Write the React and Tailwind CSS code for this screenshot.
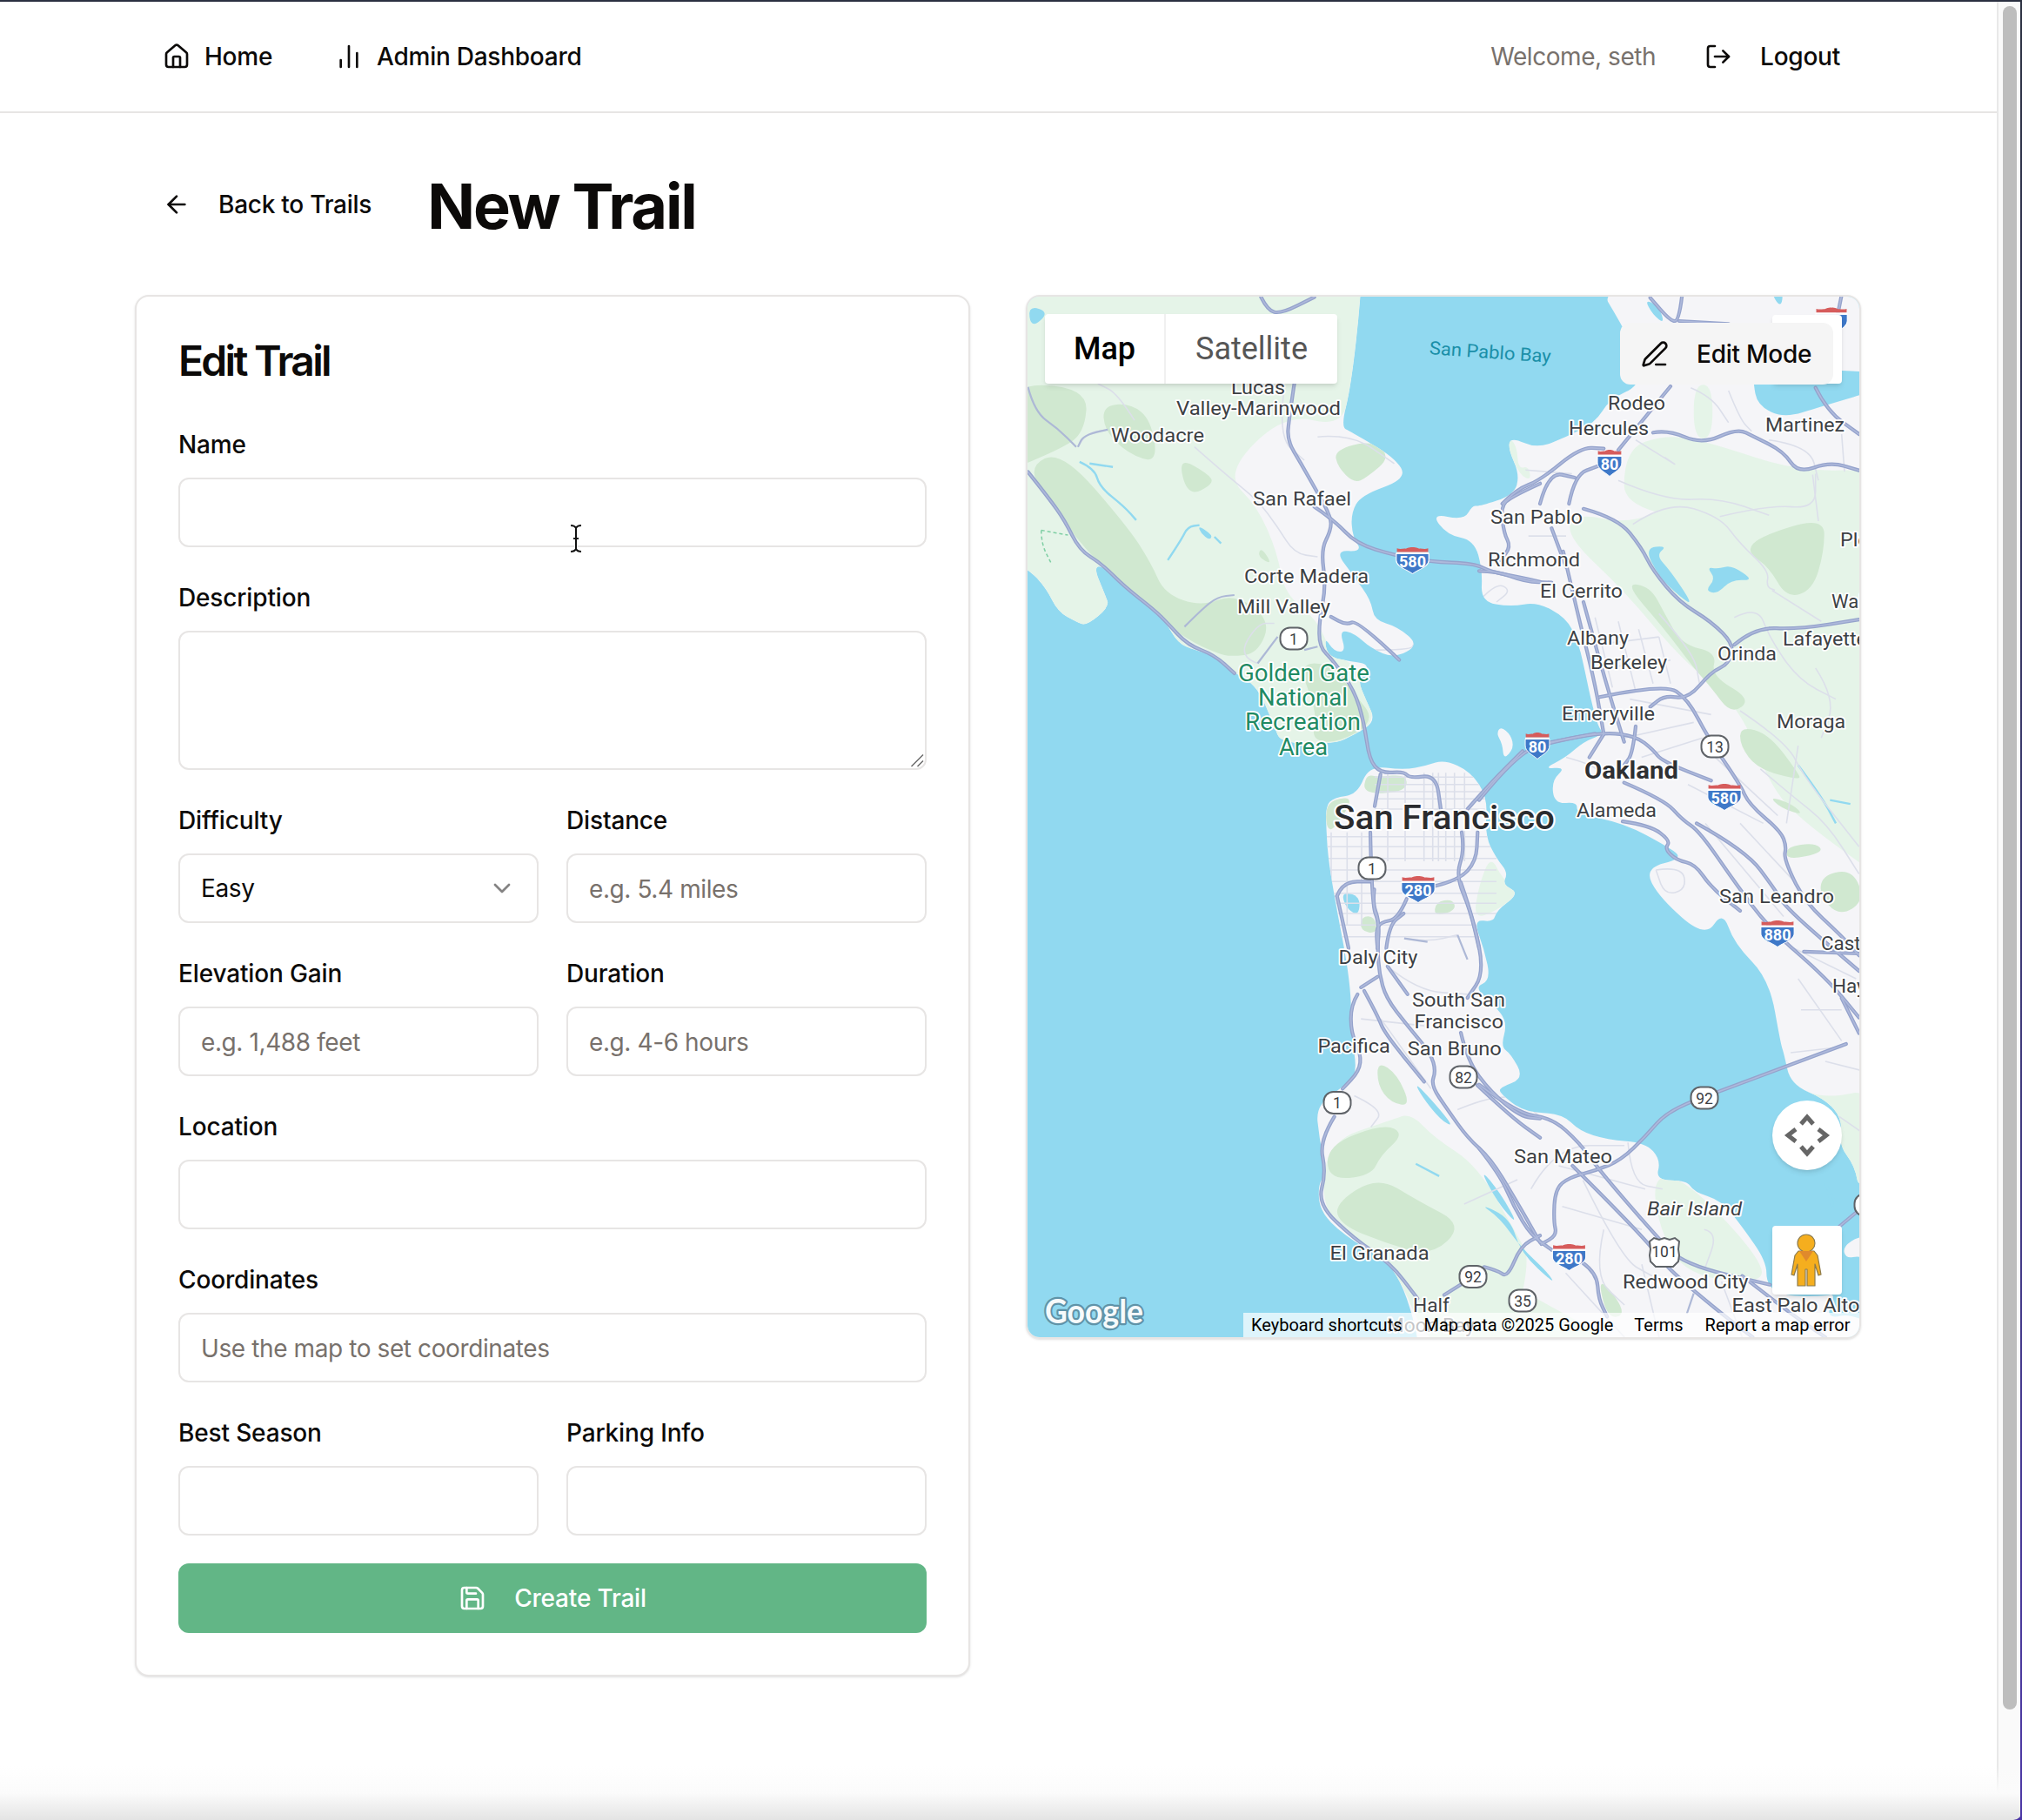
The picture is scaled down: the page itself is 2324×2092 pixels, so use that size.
import React from "react";
import { House, ChartNoAxesColumn, LogOut, ArrowLeft, ChevronDown, Save, PenLine } from "lucide-react";

const Z = {
  r: [0, 0, 1, 1],
  z3: [1170, 330, 2.613, 2.613],
  z4: [1170, 930, 2.613, 2.489],
  z5: [1700, 1200, 2.513, 3],
  z6: [1700, 500, 3, 2.24],
  z10: [1700, 339, 3, 3],
  z11: [1480, 830, 3, 3],
};
const conv = (z, s) =>
  s.trim().split(/\s+/).map((p) => {
    const [a, b] = p.split(",").map(Number);
    return `${(Z[z][0] + a / Z[z][2]).toFixed(1)},${(Z[z][1] + b / Z[z][3]).toFixed(1)}`;
  }).join(" ");
const pts = (...segs) => segs.map(([z, s]) => conv(z, s)).join(" ");
const smooth = (str, closed) => {
  const p = str.trim().split(/\s+/).map((q) => q.split(",").map(Number));
  const mid = (a, b) => `${((a[0] + b[0]) / 2).toFixed(1)} ${((a[1] + b[1]) / 2).toFixed(1)}`;
  const n = p.length;
  if (n < 3) return `M${p[0][0]} ${p[0][1]}L${p[n - 1][0]} ${p[n - 1][1]}`;
  if (closed) {
    let d = `M${mid(p[n - 1], p[0])}`;
    for (let i = 0; i < n; i++) d += `Q${p[i][0]} ${p[i][1]} ${mid(p[i], p[(i + 1) % n])}`;
    return d + "Z";
  }
  let d = `M${p[0][0]} ${p[0][1]}`;
  for (let i = 1; i < n - 1; i++) d += `Q${p[i][0]} ${p[i][1]} ${mid(p[i], p[i + 1])}`;
  return d + `L${p[n - 1][0]} ${p[n - 1][1]}`;
};

const LAND = [
  pts(["z3", "-200,700 30,845 85,905 120,975 175,1005 205,1018 275,960 262,925 225,835 270,845 330,905 400,965 440,1000 480,1070 530,1090 600,1110 650,1160 720,1200 770,1320 790,1370 950,1372 1010,1345 1075,1305 1045,1240 1020,1180 1050,1150 1045,1130 1000,1125 930,1110 920,1050 950,1095 985,1095 965,1030 1010,1040 1060,1085 1130,1115 1205,1075 1140,1020 1070,1000 1060,940 1010,870 950,790 1035,795 1005,750 1000,680 1030,625 1170,575 1130,510 1000,435 970,420 1000,300 1030,30 1040,-200 -200,-200"]),
  pts(["z10", "400,-50 490,100 540,200 560,310 450,360 400,440 300,490 200,530 110,490 100,530 140,620 120,690 0,730"], ["z3", "1365,655 1340,700 1240,680 1290,745 1370,760 1395,850 1390,945 1480,960"], ["z6", "200,430 300,470 340,530 360,590 385,680 410,750 430,770 360,790 300,830 220,860 300,855 250,890 260,950 340,945 335,975 500,1000 650,1060 705,1090 570,1115 620,1190 780,1295 840,1225 880,1310 1000,1400 1040,1568"], ["z5", "880,30 900,140 1000,190 1050,260 1040,350 1085,420 1100,520"], ["r", "2400,1400 2400,100"]),
  pts(["z11", "130,290 160,260 240,250 280,150 400,165 480,150 540,130 630,170 690,260 680,390 720,470 760,520 740,560 800,590 720,650 710,690 640,680"], ["z4", "1400,400 1420,490 1370,510 1430,560 1470,610 1450,680 1480,700 1520,770"], ["z5", "60,150 60,170 130,235 240,240 290,300 370,330 480,340 525,400 510,470 600,470 620,510 700,540 760,630 830,750 830,830 880,870 1000,870 1030,860 1000,950 1090,925 1300,1100 1300,1300"], ["z4", "1210,1700 1205,1500 1130,1300 1010,1240 910,1160 900,1080 925,1040 905,940 895,850 975,795 1020,760 1000,640 1000,500 950,250 930,130 925,30"], ["z11", "135,400"]),
  pts(["z5", "1050,700 1100,660 1200,660 1200,760 1100,730 1060,740"]),
  pts(["z11", "720,40 735,15 770,45 780,90 745,130 740,75"]),
];
const LIGHT = [
  pts(["z3", "-200,-200 1040,-200 1030,30 1000,300 970,420 800,380 620,560 720,660 780,800 800,920 900,1000 940,1100 1040,1150 1075,1305 1010,1345 950,1372 790,1370 770,1320 720,1200 650,1160 600,1110 530,1090 480,1070 440,1000 400,965 330,905 270,845 225,835 262,925 275,960 205,1018 175,1005 120,975 85,905 30,845 -200,700"]),
  pts(["z6", "330,200 520,230 700,170 1000,180 1500,100 1500,1200 1120,1000 1000,900 900,700 700,580 500,400 300,260"]),
  pts(["z10", "500,530 650,480 800,510 1100,610 1400,600 1400,780 500,780"]),
  pts(["z10", "740,310 805,310 805,495 740,495"]),
  pts(["z10", "100,490 130,520 135,600 170,590 180,640 140,620 100,530"]),
  pts(["z4", "930,950 1120,890 1180,870 1250,940 1380,1020 1500,1220 1540,1290 1470,1560 1240,1560 1130,1300 1010,1240 910,1140"]),
  pts(["z5", "0,770 200,900 430,1050 0,1050"]),
  pts(["z5", "500,450 600,470 800,720 830,830 600,800 520,640"]),
  pts(["z5", "900,140 1000,190 1150,150 1150,560 1040,400"]),
  pts(["z11", "640,680 720,650 800,590 740,540 700,460 660,560"]),
];
const MID = [
  pts(["z3", "-50,290 210,300 200,440 120,490 -50,560"]),
  pts(["z3", "30,540 130,490 330,720 400,830 440,920 550,960 650,920 760,1000 720,1100 640,1110 600,1100 510,1060 420,990 290,880 180,760 90,640"]),
  pts(["z3", "255,355 340,350 400,400 420,530 330,500 260,430"]),
  pts(["z3", "480,510 570,560 590,590 510,630"]),
  pts(["z3", "950,490 1060,460 1120,510 1050,570 1010,590 960,540"]),
  pts(["z3", "730,780 765,835 720,810"]),
  pts(["z3", "840,1130 940,1130 1010,1220 1075,1305 960,1370 880,1360 900,1280"]),
  pts(["z3", "1180,1180 1240,1125 1275,1160 1275,1210 1230,1205"]),
  pts(["z6", "970,260 1190,210 1190,300 1150,400 1060,420 1000,340 920,300"]),
  pts(["z6", "500,380 590,390 640,460 700,540 820,560 800,620 940,680 870,720 800,650 740,600 640,500"]),
  pts(["z6", "900,750 1000,770 1100,870 1110,890 960,860 900,800"]),
  pts(["z6", "1190,1130 1290,1120 1330,1200 1240,1240 1170,1180"]),
  pts(["z6", "1060,1060 1160,1050 1190,1075 1060,1095"]),
  pts(["z6", "1000,930 1080,950 1120,980 1040,960"]),
  pts(["z4", "950,1130 1080,1050 1200,1120 1340,1190 1240,1280 1100,1240 970,1190"]),
  pts(["z4", "930,960 1100,900 1160,930 1090,990 1060,1050 930,1060"]),
  pts(["z4", "1080,720 1140,760 1180,850 1120,840 1080,790"]),
  pts(["z5", "340,790 430,930 370,950"]),
  pts(["z11", "270,180 310,190 410,180 410,240 260,250"]),
  pts(["z11", "130,300 160,265 230,260 160,370 135,370"]),
  pts(["z11", "510,620 570,610 580,650 505,670"]),
  pts(["z11", "255,670 300,670 310,730 250,720"]),
];
const WATER = [
  pts(["z10", "945,300 960,380 1050,425 1180,385 1400,320 1400,260 950,260"]),
  pts(["z10", "570,15 620,40 640,100 600,70"]),
  pts(["z10", "1005,-10 1050,-10 1040,45"]),
  pts(["z6", "570,290 650,285 610,310 660,350 740,440 690,415 620,365"]),
  pts(["z6", "785,340 825,345 870,335 950,375 870,372 820,410 780,400 815,370"]),
  pts(["z3", "540,715 585,745 575,760 550,740"]),
  pts(["z3", "30,55 95,75 40,125"]),
  pts(["z4", "1385,1025 1450,1100 1505,1195 1440,1125"]),
  pts(["z4", "1190,780 1250,840 1310,910 1270,890 1215,825"]),
  pts(["z5", "0,550 90,600 120,720 220,830 200,790 120,700 60,600"]),
  pts(["z5", "1000,480 1030,550 1015,570"]),
  pts(["z11", "185,585 250,600 245,670 200,640"]),
];
const STREAMS = [
  ["z3", "185,525 230,545 245,600 320,660 355,700"], ["z3", "215,530 285,540"], ["z3", "450,820 490,760 510,720 545,715"], ["z3", "590,750 610,770"],
  ["z4", "1195,1015 1265,1050"], ["z6", "1100,850 1180,930 1230,1000"], ["z6", "1210,940 1280,950"], ["z5", "1000,480 1030,550"],
];
const MINOR = [
  ...[190, 215, 240, 265, 300, 395, 430, 470, 510, 550, 590, 625, 660, 700, 740].map((y) => ["z11", y > 350 ? `120,${y} 720,${y}` : `300,${y} 680,${y}`]),
  ...[150, 205, 255, 345, 405, 470, 500, 520, 545, 575, 610].map((x) => ["z11", `${x},${x < 300 ? 380 : 175} ${x},${x < 300 ? 700 : 480}`]),
  ["z3", "180,480 200,440 270,428"], ["z3", "530,480 620,560 720,640 780,720 830,800 900,810"],
  ["z3", "800,300 780,450 860,520"], ["z3", "900,450 1000,440 1130,530"], ["z3", "350,400 300,320 240,290"],
  ["z3", "720,1130 660,1110 720,1010 770,1010"], ["z3", "1060,1090 1180,1090 1190,1070"],
  ["z6", "530,230 650,170 830,210 900,280 1000,350 990,390 1020,400"], ["z6", "830,210 1000,180 1160,190 1160,100"],
  ["z6", "1010,400 1180,480"], ["z6", "880,470 960,440 1000,520 1100,630 1230,680"], ["z6", "620,460 740,560 760,640"],
  ["z6", "900,710 1060,790 1120,880 1310,1060"], ["z6", "970,860 1080,930 1200,1000 1310,1130"], ["z6", "1100,800 1060,1000"],
  ["z6", "1160,600 1230,680 1180,780"], ["z6", "400,470 460,650"], ["z6", "480,480 540,660"], ["z6", "550,500 600,640"], ["z6", "620,520 660,640"],
  ["z6", "400,540 620,520"], ["z6", "420,600 660,580"], ["z6", "520,680 800,720"], ["z6", "500,780 740,740"], ["z6", "560,830 770,780"],
  ["z6", "720,900 980,1000"], ["z6", "800,820 1030,980"], ["z6", "780,1000 1050,1240"], ["z6", "900,1000 1100,1160"], ["z6", "1000,1290 1300,1400"], ["z6", "1100,1400 1250,1560"], ["z6", "1110,1480 1250,1480"],
  ["z6", "610,1120 700,1110 715,1170 640,1185 610,1120"], ["z6", "300,830 400,850 420,880"], ["z6", "160,90 320,100"], ["z6", "170,260 300,260"], ["z6", "10,420 60,380 110,400 60,430"],
  ["z10", "540,500 700,600 640,560"], ["z10", "860,330 900,430 940,470"], ["z10", "730,320 800,350 860,440"], ["z10", "1000,500 1140,520 1170,640"], ["z10", "1250,480 1260,610"], ["z10", "480,640 640,710 830,700 1000,760"], ["z10", "1150,620 1170,780"],
  ["z4", "1160,370 1230,380 1320,360"], ["z4", "1110,450 1200,520 1350,530"], ["z4", "1030,600 1220,620"], ["z4", "1010,820 1100,860 1060,910"], ["z4", "1320,860 1470,800 1568,880"], ["z4", "1340,1130 1500,1060"], ["z4", "1090,600 1240,800"],
  ["z5", "150,500 220,350 420,350"], ["z5", "230,420 480,500"], ["z5", "240,560 470,640"], ["z5", "300,470 410,740 500,800"], ["z5", "360,640 330,800 420,900"], ["z5", "430,340 440,480 530,500"], ["z5", "650,640 690,650 650,780"],
  ["z5", "250,790 420,1011"], ["z5", "470,760 520,1011"], ["z5", "700,820 760,1011"], ["z5", "1000,60 1100,90"], ["z5", "1040,250 1100,300"], ["z5", "900,30 1050,10"],
];
const MEDIUM = [
  ["z3", "270,428 200,440 180,480"], ["z3", "30,300 50,375 120,425 175,480"],
  ["z3", "500,1020 550,970 600,930 650,925"], ["z3", "720,1130 780,1050"], ["z3", "860,1090 900,1080"],
  ["z4", "1160,370 1230,380"], ["z4", "1320,360 1350,430"], ["z5", "620,860 600,930"],
];
const MAJOR = [
  ["z3", "730,30 750,70 790,80 890,30"],
  ["z3", "830,290 815,390 808,460 850,530 890,600 940,690 940,730 910,790 925,900 905,1000 905,1080 945,1120 1010,1210 1040,1310 1055,1420 1090,1460 1160,1455 1175,1475 1255,1465 1270,1568"],
  ["z3", "890,660 950,700 1015,770 1130,805 1235,825 1370,830 1420,855 1500,870 1568,885"],
  ["z3", "30,555 90,630 140,700 185,790 250,830 320,900 410,970 450,1010 510,1075 590,1105 650,1160"],
  ["z3", "1145,1120 1020,1000 985,1015 940,990"],
  ["z3", "1568,590 1480,630 1450,660 1460,740 1480,780 1450,820"],
  ["z11", "320,180 300,290"],
  ["z11", "285,380 290,630 315,690 310,780"],
  ["z11", "170,600 190,550 290,550"], ["z11", "170,600 210,780"],
  ["z11", "510,565 590,545 650,480 655,380"],
  ["z11", "600,380 610,440 580,530 630,650 660,780"],
  ["z11", "410,610 380,680 320,690 305,720 310,780"], ["z11", "340,780 350,700 400,660"],
  ["z11", "620,300 700,210 810,100"], ["z11", "905,70 1060,40"],
  ["z4", "1070,230 1065,270 1085,320 1080,400 1085,470 1105,540 1170,620 1240,700 1255,750 1240,790 1290,860 1350,940 1420,1000 1490,1110 1568,1240"],
  ["z4", "1020,530 1000,560 1000,640 1030,700 1025,750 975,800"],
  ["z4", "950,880 905,950 925,1040 900,1130 1010,1230 1120,1300 1200,1400"],
  ["z4", "1030,510 1080,480"], ["z4", "1040,520 1080,590 1100,640 1220,780"],
  ["z4", "1330,640 1350,720 1420,810 1510,880 1568,885"], ["z4", "1380,790 1480,880 1568,940"],
  ["z4", "1330,210 1370,320 1400,470 1350,540"], ["z4", "1110,450 1170,530"],
  ["z4", "1280,1390 1330,1360"], ["z4", "1400,1310 1440,1320 1470,1340 1510,1250 1568,1220"],
  ["z5", "1060,0 700,160 545,230 480,320 410,400 340,435 260,460 220,500 215,610 225,660 180,690"],
  ["z5", "0,140 110,240 210,255 290,340 350,440 510,660 590,760 840,830"],
  ["z5", "0,360 60,450 100,560 150,660 210,710"],
  ["z5", "270,420 480,670 540,770 700,930 790,1011"],
  ["z5", "760,800 900,930 1000,1011"],
  ["z5", "300,755 340,790 345,880 370,940"],
  ["z5", "1040,630 1100,570"],
  ["z10", "80,720 130,670 210,640 350,525 430,530"], ["z10", "210,720 240,610 330,630"], ["z10", "310,720 330,620 410,590"],
  ["z10", "480,535 660,315"], ["z10", "600,475 650,465 770,515 890,460 950,490 1050,540 1100,615 1210,575 1310,605"],
  ["z10", "1160,320 1200,400 1310,480"], ["z10", "690,90 860,100"], ["z10", "700,0 690,90 660,90 590,10"], ["z10", "1250,0 1230,100"],
  ["z6", "360,190 480,215 560,290 600,350 690,430 800,480 880,540 860,590 800,610 720,680 640,670 590,700"],
  ["z6", "880,540 950,495 1100,500 1310,475"],
  ["z6", "415,675 640,640 720,680 790,780 900,900 930,950 1040,1020 1060,1060 1050,1090 1120,1200 1250,1290 1310,1340"],
  ["z6", "290,300 340,460 400,640 430,770"], ["z6", "250,240 300,340"], ["z6", "360,430 430,620 500,790"],
  ["z6", "0,940 130,820 250,790 430,765 540,775 600,810 630,840 800,890"],
  ["z6", "540,750 530,820 500,850"], ["z6", "430,770 380,830"],
  ["z6", "500,895 640,940 700,990 760,1020 880,1150 1000,1270 1200,1400 1310,1500"],
  ["z6", "750,1000 920,1070 1020,1170 1060,1220 1310,1380"],
  ["z6", "495,995 590,1005 660,1045 640,1065 680,1095 745,1105 800,1165 900,1225"],
  ["z6", "1120,1330 1310,1335"], ["z6", "1250,1450 1310,1540"],
  ["z6", "0,350 60,350 160,378 250,380"],
];
const LABELS = [
  ["Lucas", 1415, 453, 62], ["Valley-Marinwood", 1352, 477, 189], ["Woodacre", 1277, 508, 107], ["San Rafael", 1440, 581, 113],
  ["Corte Madera", 1430, 670, 143], ["Mill Valley", 1422, 705, 107], ["Rodeo", 1848, 471, 66], ["Hercules", 1803, 500, 92],
  ["Martinez", 2029, 496, 91], ["San Pablo", 1713, 602, 106], ["Richmond", 1710, 651, 106], ["El Cerrito", 1770, 687, 95],
  ["Albany", 1801, 741, 71], ["Berkeley", 1828, 769, 88], ["Orinda", 1974, 759, 68], ["Lafayette", 2049, 742, 97],
  ["Pleasant Hill", 2115, 628, 130], ["Walnut Creek", 2105, 699, 130], ["Moraga", 2042, 837, 79], ["Emeryville", 1795, 828, 107],
  ["Alameda", 1812, 939, 92], ["San Leandro", 1976, 1038, 132], ["Castro Valley", 2093, 1092, 130], ["Hayward", 2106, 1141, 88],
  ["Daly City", 1538.5, 1107.6, 91], ["South San", 1623, 1157, 107], ["Francisco", 1625.4, 1181.5, 102.5], ["Pacifica", 1514.4, 1209.6, 83.4],
  ["San Bruno", 1617.8, 1213, 108], ["El Granada", 1528.6, 1448, 114], ["Half", 1624, 1507.7, 42], ["Moon Bay", 1594, 1531, 101],
  ["San Mateo", 1740, 1337, 113], ["Redwood City", 1865, 1481, 144.5], ["East Palo Alto", 1990.5, 1508, 147],
];
const PARK = [["Golden Gate", 1423, 783, 151], ["National", 1446, 811, 103], ["Recreation", 1431, 839, 133], ["Area", 1470, 868, 56]];
const INTERSTATES = [
  [1623.5, 644, 39, 31, "580"], [1850, 532, 29, 31, "80"], [1767, 857, 29, 31, "80"], [2105, 369, 38, 32, ""],
  [1982, 916, 40, 31, "580"], [2043, 1073, 40, 31, "880"], [1630, 1022, 40, 31, "280"], [1803.5, 1445, 40, 31, "280"],
];
const STATES = [
  [1487, 734, "1"], [1577, 998, "1"], [1971, 858, "13"], [1682, 1238, "82"], [1537, 1267.5, "1"],
  [1959, 1262, "92"], [1693, 1467.6, "92"], [1750, 1495, "35"], [2147, 1385, "84"],
];

const Interstate = ({ c }) => {
  const [cx, cy, w, h, n] = c;
  return (
    <g>
      <g transform={`translate(${cx - w / 2} ${cy - h / 2}) scale(${w / 100} ${h / 100})`}>
        <path d="M2 26 H98 V50 C98 74 68 84 50 100 C32 84 2 74 2 50 Z" fill="#3e78c8" stroke="#fff" strokeWidth="3" />
        <path d="M4 20 V6 C14 10 22 6 30 7 C38 3 44 0 50 2 C56 0 62 3 70 7 C78 6 86 10 96 6 V20 Z" fill="#d65c5c" />
        <rect x="2" y="20" width="96" height="7" fill="#fff" />
      </g>
      <text x={cx} y={cy + h * 0.26} textAnchor="middle" fontSize="18" fontWeight="700" fill="#fff" fontFamily="Roboto, sans-serif">{n}</text>
    </g>
  );
};
const StateShield = ({ c }) => {
  const [cx, cy, n] = c;
  return (
    <g>
      <rect x={cx - 15.5} y={cy - 12.5} width="31" height="25" rx="11" fill="#fff" stroke="#5f6368" strokeWidth="2" />
      <text x={cx} y={cy + 6.5} textAnchor="middle" fontSize="17.5" fill="#3c4043" fontFamily="Roboto, sans-serif">{n}</text>
    </g>
  );
};
const halo = { paintOrder: "stroke" };

const MapArt = () => (
  <svg className="block h-full w-full" viewBox="1181 341 956 1196" preserveAspectRatio="none">
    <defs>
      <clipPath id="landclip">
        {LAND.map((p, i) => <path key={i} d={smooth(p, true)} />)}
      </clipPath>
    </defs>
    <rect x="1181" y="341" width="956" height="1196" fill="#91d9f0" />
    {LAND.map((p, i) => <path key={i} d={smooth(p, true)} fill="#f5f5f8" />)}
    <g clipPath="url(#landclip)">
      {LIGHT.map((p, i) => <path key={i} d={smooth(p, true)} fill="#e5f4e8" />)}
      {MID.map((p, i) => <path key={i} d={smooth(p, true)} fill="#d0e8d0" />)}
    </g>
    {WATER.map((p, i) => <path key={i} d={smooth(p, true)} fill="#91d9f0" />)}
    {STREAMS.map(([z, s], i) => <path key={i} d={smooth(conv(z, s), false)} fill="none" stroke="#91d9f0" strokeWidth="2.4" />)}
    <path d={smooth(pts(["z3", "70,730 70,770 100,830"]), false)} fill="none" stroke="#7fcfa4" strokeWidth="1.5" strokeDasharray="4 3" />
    <path d={smooth(pts(["z3", "70,730 150,745"]), false)} fill="none" stroke="#7fcfa4" strokeWidth="1.5" strokeDasharray="4 3" />
    <g clipPath="url(#landclip)">
      {MINOR.map(([z, s], i) => <path key={i} d={smooth(conv(z, s), false)} fill="none" stroke="#dcdfea" strokeWidth="1.6" />)}
    </g>
    {MEDIUM.map(([z, s], i) => <path key={i} d={smooth(conv(z, s), false)} fill="none" stroke="#adb8d6" strokeWidth="2.2" />)}
    {MAJOR.map(([z, s], i) => <path key={i} d={smooth(conv(z, s), false)} fill="none" stroke="#95a3cc" strokeWidth="4.2" strokeLinecap="round" />)}
    {MAJOR.map(([z, s], i) => <path key={i} d={smooth(conv(z, s), false)} fill="none" stroke="#aeb9db" strokeWidth="1.6" strokeLinecap="round" />)}
    {INTERSTATES.map((c, i) => <Interstate key={i} c={c} />)}
    {STATES.map((c, i) => <StateShield key={i} c={c} />)}
    <g>
      <path d="M1896 1427 l5 -4 6 2 6 -2 6 2 6 -2 5 4 -1 9 1 7 -1 7 -6 6 h-20 l-6 -6 -1 -7 1 -7 Z" fill="#fff" stroke="#5f6368" strokeWidth="2" />
      <text x="1913" y="1445" textAnchor="middle" fontSize="17.5" fill="#3c4043" fontFamily="Roboto, sans-serif">101</text>
    </g>
    <g fontFamily="Roboto, sans-serif">
      {LABELS.map(([t, x, y, w]) => (
        <text key={t} x={x} y={y} textLength={w} lengthAdjust="spacingAndGlyphs" fontSize="22" fill="#3c3f44" stroke="#fff" strokeWidth="3.5" strokeLinejoin="round" style={halo}>{t}</text>
      ))}
      {PARK.map(([t, x, y, w]) => (
        <text key={t} x={x} y={y} textLength={w} lengthAdjust="spacingAndGlyphs" fontSize="27" fill="#1f8a63" stroke="#fff" strokeWidth="3.5" strokeLinejoin="round" style={halo}>{t}</text>
      ))}
      <text x="1821" y="895" textLength="108" lengthAdjust="spacingAndGlyphs" fontSize="28" fontWeight="700" fill="#2f3033" stroke="#fff" strokeWidth="3.5" strokeLinejoin="round" style={halo}>Oakland</text>
      <text x="1533" y="953" textLength="254" lengthAdjust="spacingAndGlyphs" fontSize="38" fontWeight="500" fill="#2b2c2f" stroke="#fff" strokeWidth="4" strokeLinejoin="round" style={halo}>San Francisco</text>
      <text x="1893" y="1397" textLength="109" lengthAdjust="spacingAndGlyphs" fontSize="22" fontStyle="italic" fill="#3c3f44" stroke="#fff" strokeWidth="3.5" strokeLinejoin="round" style={halo}>Bair Island</text>
      <text transform="rotate(4 1642 408)" x="1642.5" y="407" textLength="140" lengthAdjust="spacingAndGlyphs" fontSize="21" fill="#1a8fa8">San Pablo Bay</text>
      <text x="1201" y="1521" textLength="113" lengthAdjust="spacingAndGlyphs" fontSize="38" fontWeight="700" fontFamily="Lato, sans-serif" fill="#f6fafb" stroke="#5f93a8" strokeWidth="4.5" strokeLinejoin="round" style={halo}>Google</text>
    </g>
  </svg>
);

const Label = ({ children }) => (
  <label className="mt-[6px] mb-[18px] block text-[28px] leading-[40px] font-medium tracking-[-0.15px] text-[#0c0a09]">{children}</label>
);
const inputCls =
  "block h-[80px] w-full rounded-xl border-2 border-[#e7e5e4] bg-white px-6 pt-[2px] text-[28px] tracking-[-0.4px] text-[#0c0a09] outline-none placeholder:text-[#78716c]";
const Field = ({ label, placeholder }) => (
  <div className="min-w-0">
    <Label>{label}</Label>
    <input className={inputCls} placeholder={placeholder} />
  </div>
);

export default function App() {
  return (
    <div className="relative flex h-[2092px] w-[2324px] overflow-hidden bg-white font-['Inter',sans-serif] text-[#0c0a09]">
      <div className="flex h-full w-[2295px] shrink-0 flex-col">
        <header className="h-[130px] shrink-0 border-t-2 border-b-2 border-t-[#2b3040] border-b-[#e7e5e4]">
          <nav className="flex h-full items-center pr-[180px] pl-[187px] text-[28px] font-medium tracking-[-0.25px]">
            <a className="flex items-center gap-4">
              <House size={32} />
              <span>Home</span>
            </a>
            <a className="ml-[72px] flex items-center gap-4">
              <ChartNoAxesColumn size={32} />
              <span>Admin Dashboard</span>
            </a>
            <span className="ml-auto font-normal tracking-[-0.45px] text-[#78716c]">Welcome, seth</span>
            <a className="ml-[56px] flex items-center gap-8">
              <LogOut size={32} />
              <span>Logout</span>
            </a>
          </nav>
        </header>

        <main className="ml-[155px] w-[1984px] pt-[69px]">
          <div className="mb-[68px] flex h-[72px] items-center">
            <a className="flex items-center gap-8 pl-[32px] text-[28px] font-medium tracking-[-0.25px]">
              <ArrowLeft size={32} />
              <span>Back to Trails</span>
            </a>
            <h1 className="ml-[64px] pt-[4px] text-[72px] leading-[72px] font-bold tracking-[-2.2px]">New Trail</h1>
          </div>

          <div className="grid grid-cols-2 items-start gap-16">
            <section className="rounded-2xl border-2 border-[#e7e5e4] bg-white p-12 shadow-sm">
              <h2 className="mb-[44px] text-[48px] leading-[52px] font-semibold tracking-[-2.7px]">Edit Trail</h2>
              <form className="flex flex-col gap-8">
                <div className="relative">
                  <Label>Name</Label>
                  <input className={inputCls} />
                  <svg className="absolute top-[117px] left-[448px] h-[34px] w-[18px]" viewBox="0 0 18 34" fill="none">
                    <path d="M3 2c3 0 5 1 6 3 1-2 3-3 6-3M3 32c3 0 5-1 6-3 1 2 3 3 6 3M9 5v24M6 17h6" stroke="#fff" strokeWidth="4" />
                    <path d="M3 2c3 0 5 1 6 3 1-2 3-3 6-3M3 32c3 0 5-1 6-3 1 2 3 3 6 3M9 5v24M6 17h6" stroke="#111" strokeWidth="2" />
                  </svg>
                </div>
                <div className="relative">
                  <Label>Description</Label>
                  <textarea className="block h-[160px] w-full resize-none rounded-xl border-2 border-[#e7e5e4] bg-white px-6 py-4 text-[28px] outline-none" />
                  <svg className="absolute right-[3px] bottom-[3px] h-[16px] w-[16px]" viewBox="0 0 16 16" fill="none" stroke="#6b6b6b" strokeWidth="1.5">
                    <path d="M1.5 15 15 1.5M8.5 15 15 8.5" />
                  </svg>
                </div>
                <div className="grid grid-cols-2 gap-8">
                  <div className="min-w-0">
                    <Label>Difficulty</Label>
                    <button type="button" className="flex h-[80px] w-full items-center justify-between rounded-xl border-2 border-[#e7e5e4] bg-white px-6 text-[28px] tracking-[-0.4px]">
                      <span>Easy</span>
                      <ChevronDown size={32} className="opacity-50" />
                    </button>
                  </div>
                  <Field label="Distance" placeholder="e.g. 5.4 miles" />
                </div>
                <div className="grid grid-cols-2 gap-8">
                  <Field label="Elevation Gain" placeholder="e.g. 1,488 feet" />
                  <Field label="Duration" placeholder="e.g. 4-6 hours" />
                </div>
                <Field label="Location" />
                <Field label="Coordinates" placeholder="Use the map to set coordinates" />
                <div className="grid grid-cols-2 gap-8">
                  <Field label="Best Season" />
                  <Field label="Parking Info" />
                </div>
                <button type="button" className="flex h-[80px] w-full items-center justify-center gap-8 rounded-xl bg-[#62b686] text-[28px] font-medium tracking-[-0.2px] text-white">
                  <Save size={32} />
                  <span>Create Trail</span>
                </button>
              </form>
            </section>

            <section className="relative h-[1200px] overflow-hidden rounded-2xl border-2 border-[#e7e5e4] shadow-sm">
              <MapArt />
              <div className="absolute top-[20px] left-[20px] flex h-[80px] w-[336px] rounded-[4px] bg-white font-['Roboto',sans-serif] text-[36px] shadow-md">
                <span className="flex w-[139px] items-center justify-center border-r-2 border-[#f0f0f0] font-medium text-black">Map</span>
                <span className="flex flex-1 items-center justify-center text-[#565656]">Satellite</span>
              </div>
              <div className="absolute top-[21px] left-[856px] h-[79px] w-[80px] rounded-[4px] bg-white shadow-md" />
              <button type="button" className="absolute top-[30px] left-[681px] flex h-[71px] w-[245px] items-center gap-8 rounded-xl bg-[#f5f5f5] pl-[24px] text-[28px] font-medium tracking-[-0.25px]">
                <PenLine size={32} />
                <span>Edit Mode</span>
              </button>
              <div className="absolute top-[924px] left-[856px] h-[80px] w-[80px] rounded-full bg-white shadow-md">
                <svg className="h-full w-full" viewBox="0 0 80 80" fill="none" stroke="#666" strokeWidth="5">
                  <path d="M33 27l7-8 7 8M27 33l-9 7 9 7M53 33l9 7-9 7M33 53l7 8 7-8" />
                </svg>
              </div>
              <div className="absolute top-[1068px] left-[856px] h-[79px] w-[80px] rounded-[4px] bg-white shadow-md">
                <svg className="h-full w-full" viewBox="0 0 80 79">
                  <path d="M30 29 H48 L52 34 L56 56 L53 57 L49 44 V69 H40 V50 H38 V69 H29 V44 L25 57 L22 56 L26 34 Z" fill="#f5ae1e" stroke="#8b7a4c" strokeWidth="1.2" strokeLinejoin="round" />
                  <circle cx="39" cy="20" r="10" fill="#f5ae1e" stroke="#8b7a4c" strokeWidth="1.2" />
                  <path d="M31 29 H47 L39 41 Z" fill="#e08a2c" />
                </svg>
              </div>
              <div className="absolute right-0 bottom-0 left-[248px] flex h-[28px] items-center bg-white/70 font-['Roboto',sans-serif] text-[20px] whitespace-nowrap text-black">
                <span className="ml-[9px]">Keyboard shortcuts</span>
                <span className="ml-[25px]">Map data ©2025 Google</span>
                <span className="ml-[24px]">Terms</span>
                <span className="ml-[25px]">Report a map error</span>
              </div>
            </section>
          </div>
        </main>
      </div>

      <aside className="relative h-full flex-1 border-l-2 border-[#e8e8e8] bg-[#fafafa] pt-[7px] pl-[5px]">
        <div className="h-[1958px] w-[16px] rounded-full bg-[#bdbdbd]" />
      </aside>
      <div className="pointer-events-none absolute top-0 right-0 h-[2px] w-[29px] bg-[#2b3040]" />
      <div className="pointer-events-none absolute inset-x-0 bottom-0 h-[62px] bg-linear-to-b from-transparent via-[#fbfbfb] to-[#e4e4e4]" />
      <div className="pointer-events-none absolute top-0 right-0 bottom-0 w-[2px] bg-linear-to-b from-[#2b3040] to-[#4a35a5]" />
      <svg className="pointer-events-none absolute right-0 bottom-0 h-[10px] w-[10px]" viewBox="0 0 10 10">
        <path d="M10 0V10H0A10 10 0 0 0 10 0Z" fill="#4a35a5" />
      </svg>
    </div>
  );
}
